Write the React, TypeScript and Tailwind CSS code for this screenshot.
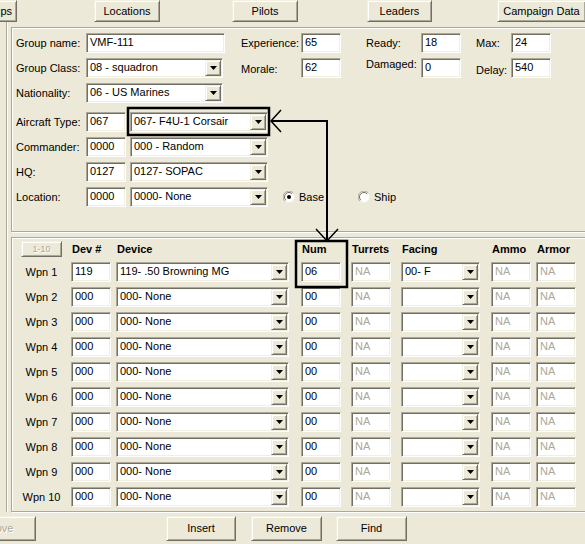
import React from "react";

// XP-classic 3D edges
const sunken =
  "border border-t-[#aca899] border-l-[#aca899] border-b-white border-r-white shadow-[inset_1px_1px_0_#716f64,inset_-1px_-1px_0_#f1efe2]";
const raised =
  "border border-t-[#f1efe2] border-l-[#f1efe2] border-b-[#716f64] border-r-[#716f64] shadow-[inset_1px_1px_0_#fff,inset_-1px_-1px_0_#aca899]";
const etched = "border border-[#aca899] shadow-[inset_1px_1px_0_#fff,1px_1px_0_#fff]";

const TextBox = ({ className = "", value, na }: { className?: string; value: string; na?: boolean }) => (
  <div
    className={`${sunken} bg-white h-[20px] shrink-0 flex items-center pl-[3px] pb-[1px] whitespace-nowrap overflow-hidden ${
      na ? "text-[#aca899]" : "text-black"
    } ${className}`}
  >
    {value}
  </div>
);

const Combo = ({ className = "", value }: { className?: string; value: string }) => (
  <div
    className={`${sunken} bg-white h-[20px] shrink-0 flex items-center justify-between pl-[3px] pr-[1px] whitespace-nowrap ${className}`}
  >
    <span className="pb-[1px]">{value}</span>
    <div className={`${raised} bg-[#ece9d8] w-[16px] h-[16px] shrink-0 flex items-center justify-center`}>
      <svg width="7" height="4" viewBox="0 0 7 4">
        <path d="M0 0h7L3.5 4z" fill="#000" />
      </svg>
    </div>
  </div>
);

const Btn = ({
  className = "",
  children,
  disabled,
}: {
  className?: string;
  children: React.ReactNode;
  disabled?: boolean;
}) => (
  <div
    className={`${raised} bg-[#ece9d8] shrink-0 flex items-center justify-center whitespace-nowrap ${
      disabled ? "text-[#aca899] [text-shadow:1px_1px_0_#fff]" : "text-black"
    } ${className}`}
  >
    {children}
  </div>
);

const Radio = ({ checked }: { checked?: boolean }) => (
  <svg width="12" height="12" viewBox="0 0 12 12" className="shrink-0">
    <circle cx="6" cy="6" r="5.5" fill="#fff" stroke="#f1efe2" />
    <path d="M1.8 10.2 A5.5 5.5 0 0 1 10.2 1.8" fill="none" stroke="#aca899" />
    <path d="M2.8 9.2 A4.5 4.5 0 0 1 9.2 2.8" fill="none" stroke="#716f64" />
    {checked && <circle cx="6" cy="6" r="2" fill="#000" />}
  </svg>
);

const Label = ({ className = "", children }: { className?: string; children: React.ReactNode }) => (
  <div className={`shrink-0 whitespace-nowrap ${className}`}>{children}</div>
);

const weapons = [
  { dev: "119", name: "119- .50 Browning MG", num: "06", facing: "00- F" },
  ...Array.from({ length: 9 }, () => ({ dev: "000", name: "000- None", num: "00", facing: "" })),
];

export default function App() {
  return (
    <div className="relative w-[585px] h-[544px] overflow-hidden bg-[#ece9d8] text-[11px] leading-none text-black font-['Liberation_Sans','Arial',sans-serif]">
      {/* TOP BUTTONS */}
      <div className="flex h-[22px]">
        <Btn className="ml-[-49px] w-[66px] h-[22px] !justify-end pr-[4px]">Groups</Btn>
        <Btn className="ml-[77px] w-[66px] h-[22px]">Locations</Btn>
        <Btn className="ml-[72px] w-[66px] h-[22px]">Pilots</Btn>
        <Btn className="ml-[69px] w-[65px] h-[22px]">Leaders</Btn>
        <Btn className="ml-[65px] w-[89px] h-[22px]">Campaign Data</Btn>
      </div>

      {/* FRAME */}
      <div className="ml-[6px] h-[490px] border-l border-[#aca899] shadow-[inset_1px_0_0_#fff] pl-[4px] pt-[5px]">
        {/* GROUP PANEL */}
        <div className={`${etched} w-[600px] h-[205px] pl-[4px] pt-[5px]`}>
          <div className="flex items-center h-[20px]">
            <Label className="w-[70px]">Group name:</Label>
            <TextBox className="w-[139px]" value="VMF-111" />
            <Label className="ml-[16px] w-[60px]">Experience:</Label>
            <TextBox className="w-[40px]" value="65" />
            <Label className="ml-[25px] w-[55px]">Ready:</Label>
            <TextBox className="w-[40px]" value="18" />
            <Label className="ml-[15px] w-[35px]">Max:</Label>
            <TextBox className="w-[40px]" value="24" />
          </div>
          <div className="flex items-center h-[20px] mt-[5px]">
            <Label className="w-[70px]">Group Class:</Label>
            <Combo className="w-[137px]" value="08 - squadron" />
            <Label className="ml-[18px] w-[60px] translate-y-[1px]">Morale:</Label>
            <TextBox className="w-[40px]" value="62" />
            <Label className="ml-[25px] w-[55px] -translate-y-[4px]">Damaged:</Label>
            <TextBox className="w-[40px]" value="0" />
            <Label className="ml-[15px] w-[35px] translate-y-[2px]">Delay:</Label>
            <TextBox className="w-[40px]" value="540" />
          </div>
          <div className="flex items-center h-[20px] mt-[5px]">
            <Label className="w-[70px]">Nationality:</Label>
            <Combo className="w-[137px]" value="06 - US Marines" />
          </div>

          <div className="flex items-center h-[20px] mt-[9px]">
            <Label className="w-[70px]">Aircraft Type:</Label>
            <TextBox className="w-[40px]" value="067" />
            <Combo className="ml-[4px] w-[138px]" value="067- F4U-1 Corsair" />
          </div>
          <div className="flex items-center h-[20px] mt-[5px]">
            <Label className="w-[70px]">Commander:</Label>
            <TextBox className="w-[40px]" value="0000" />
            <Combo className="ml-[4px] w-[138px]" value="000 - Random" />
          </div>
          <div className="flex items-center h-[20px] mt-[5px]">
            <Label className="w-[70px]">HQ:</Label>
            <TextBox className="w-[40px]" value="0127" />
            <Combo className="ml-[4px] w-[138px]" value="0127- SOPAC" />
          </div>
          <div className="flex items-center h-[20px] mt-[5px]">
            <Label className="w-[70px]">Location:</Label>
            <TextBox className="w-[40px]" value="0000" />
            <Combo className="ml-[4px] w-[138px]" value="0000- None" />
            <div className="ml-[15px] w-[75px] flex items-center gap-[4px]">
              <Radio checked />
              <span>Base</span>
            </div>
            <div className="flex items-center gap-[4px]">
              <Radio />
              <span>Ship</span>
            </div>
          </div>
        </div>

        {/* WEAPONS PANEL */}
        <div className={`${etched} w-[600px] h-[275px] mt-[5px] pl-[9px] pt-[3px]`}>
          <div className="flex items-center h-[16px] font-bold">
            <Btn disabled className="w-[41px] h-[16px] text-[9px] font-normal">
              1-10
            </Btn>
            <Label className="ml-[9px] w-[40px] pl-[1px]">Dev #</Label>
            <Label className="ml-[5px] w-[173px] pl-[1px]">Device</Label>
            <Label className="ml-[12px] w-[40px] pl-[1px]">Num</Label>
            <Label className="ml-[10px] w-[40px] pl-[1px]">Turrets</Label>
            <Label className="ml-[10px] w-[79px] pl-[1px]">Facing</Label>
            <Label className="ml-[11px] w-[40px] pl-[1px]">Ammo</Label>
            <Label className="ml-[5px] w-[40px] pl-[1px]">Armor</Label>
          </div>

          <div className="flex flex-col gap-[5px] mt-[5px]">
            {weapons.map((w, i) => (
              <div key={i} className="flex items-center h-[20px]">
                <Label className="w-[41px] text-center">Wpn {i + 1}</Label>
                <TextBox className="ml-[9px] w-[40px]" value={w.dev} />
                <Combo className="ml-[5px] w-[173px]" value={w.name} />
                <TextBox className="ml-[12px] w-[40px]" value={w.num} />
                <TextBox className="ml-[10px] w-[40px]" value="NA" na />
                <Combo className="ml-[10px] w-[79px]" value={w.facing} />
                <TextBox className="ml-[11px] w-[40px]" value="NA" na />
                <TextBox className="ml-[5px] w-[40px]" value="NA" na />
              </div>
            ))}
          </div>
        </div>
      </div>

      {/* BOTTOM BUTTONS */}
      <div className="flex pt-[4px]">
        <Btn disabled className="ml-[-36px] w-[72px] h-[25px]">
          Move
        </Btn>
        <Btn className="ml-[130px] w-[70px] h-[25px]">Insert</Btn>
        <Btn className="ml-[15px] w-[71px] h-[25px]">Remove</Btn>
        <Btn className="ml-[14px] w-[71px] h-[25px]">Find</Btn>
      </div>

      {/* ANNOTATION OVERLAY */}
      <svg className="absolute left-0 top-0 pointer-events-none" width="585" height="544" viewBox="0 0 585 544">
        <rect x="128" y="108" width="141" height="27" fill="none" stroke="#000" strokeWidth="2.5" />
        <rect x="296" y="241" width="51" height="46" fill="none" stroke="#000" strokeWidth="2.5" />
        <path d="M271 121H327V240" fill="none" stroke="#000" strokeWidth="2" />
        <path d="M281 110L271 121L281 132" fill="none" stroke="#000" strokeWidth="1.5" />
        <path d="M316 229L327 241L338 229" fill="none" stroke="#000" strokeWidth="1.5" />
      </svg>
    </div>
  );
}
